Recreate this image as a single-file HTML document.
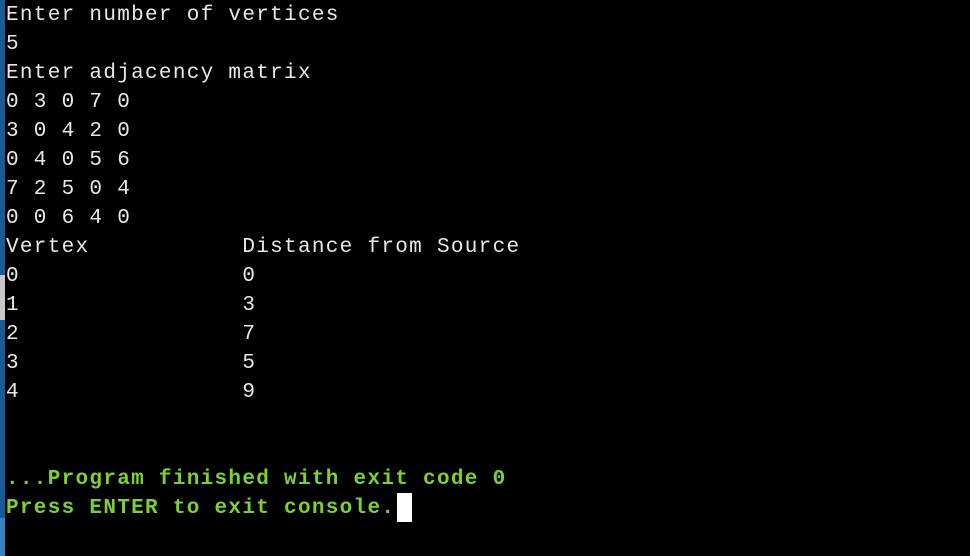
<!DOCTYPE html>
<html><head><style>
html,body{margin:0;padding:0;background:#000;width:970px;height:556px;overflow:hidden;position:relative}
.bar{position:absolute;left:0;top:0;width:5px;height:556px;background:#1a5a96}
.bar2{position:absolute;left:0;top:275px;width:5px;height:45px;background:#c8c8c8}
.bar3{position:absolute;left:0;top:518px;width:5px;height:38px;background:#3a80c0}
pre{position:absolute;left:6px;top:1px;margin:0;font-family:"Liberation Mono","Courier New",monospace;font-size:21px;letter-spacing:1.3px;line-height:29px;color:#e8e8e8}
.g{color:#7dd032;font-weight:bold}
.cur{position:absolute;left:397px;top:493px;width:15px;height:29px;background:#fff}
</style></head><body>
<div class="bar"></div><div class="bar2"></div><div class="bar3"></div>
<pre>Enter number of vertices
5
Enter adjacency matrix
0 3 0 7 0
3 0 4 2 0
0 4 0 5 6
7 2 5 0 4
0 0 6 4 0
Vertex           Distance from Source
0                0
1                3
2                7
3                5
4                9


<span class="g">...Program finished with exit code 0
Press ENTER to exit console.</span></pre>
<div class="cur"></div>
</body></html>
